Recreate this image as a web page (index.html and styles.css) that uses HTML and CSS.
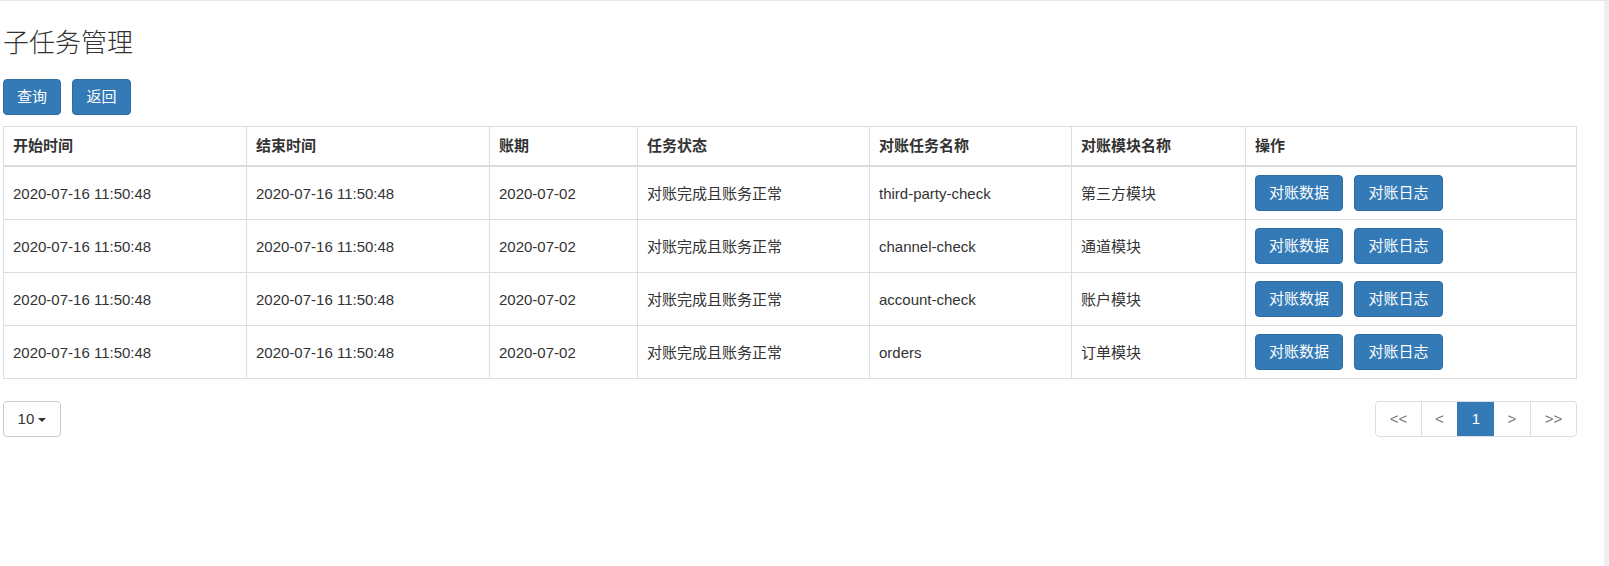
FILE: index.html
```html
<!DOCTYPE html>
<html lang="zh-CN">
<head>
<meta charset="utf-8">
<title>子任务管理</title>
<link rel="stylesheet" href="styles.css">
</head>
<body>
<div class="frame">
  <main class="page">
    <h1 class="title">子任务管理</h1>
    <div class="toolbar">
      <button class="btn btn-primary">查询</button>
      <button class="btn btn-primary">返回</button>
    </div>
    <table class="grid">
      <colgroup>
        <col style="width:243px">
        <col style="width:243px">
        <col style="width:148px">
        <col style="width:232px">
        <col style="width:202px">
        <col style="width:174px">
        <col style="width:331px">
      </colgroup>
      <thead>
        <tr><th>开始时间</th><th>结束时间</th><th>账期</th><th>任务状态</th><th>对账任务名称</th><th>对账模块名称</th><th>操作</th></tr>
      </thead>
      <tbody>
        <tr><td>2020-07-16 11:50:48</td><td>2020-07-16 11:50:48</td><td>2020-07-02</td><td>对账完成且账务正常</td><td>third-party-check</td><td>第三方模块</td><td><div class="ops"><button class="btn btn-primary btn-op">对账数据</button><button class="btn btn-primary btn-op">对账日志</button></div></td></tr>
        <tr><td>2020-07-16 11:50:48</td><td>2020-07-16 11:50:48</td><td>2020-07-02</td><td>对账完成且账务正常</td><td>channel-check</td><td>通道模块</td><td><div class="ops"><button class="btn btn-primary btn-op">对账数据</button><button class="btn btn-primary btn-op">对账日志</button></div></td></tr>
        <tr><td>2020-07-16 11:50:48</td><td>2020-07-16 11:50:48</td><td>2020-07-02</td><td>对账完成且账务正常</td><td>account-check</td><td>账户模块</td><td><div class="ops"><button class="btn btn-primary btn-op">对账数据</button><button class="btn btn-primary btn-op">对账日志</button></div></td></tr>
        <tr><td>2020-07-16 11:50:48</td><td>2020-07-16 11:50:48</td><td>2020-07-02</td><td>对账完成且账务正常</td><td>orders</td><td>订单模块</td><td><div class="ops"><button class="btn btn-primary btn-op">对账数据</button><button class="btn btn-primary btn-op">对账日志</button></div></td></tr>
      </tbody>
    </table>
    <div class="footer">
      <button class="btn btn-default page-size">10 <span class="caret"></span></button>
      <ul class="pager">
        <li class="pg">&lt;&lt;</li>
        <li class="pg">&lt;</li>
        <li class="pg active">1</li>
        <li class="pg">&gt;</li>
        <li class="pg">&gt;&gt;</li>
      </ul>
    </div>
  </main>
  <div class="strip"></div>
</div>
</body>
</html>
```

FILE: styles.css
```css
html, body {
  margin: 0;
  padding: 0;
  background: #fff;
}
body {
  font-family: "Liberation Sans", Arial, "Noto Sans CJK SC", sans-serif;
  font-size: 15px;
  color: #333;
}
.frame {
  display: flex;
  height: 566px;
  border-top: 1px solid #e8e8e8;
  box-sizing: border-box;
}
.page {
  flex: 1;
  padding: 0 27px 0 3px;
}
.strip {
  width: 6px;
  background: #efefef;
}
.title {
  margin: 25px 0 0 0;
  font-family: "Noto Sans CJK SC", sans-serif;
  font-weight: 300;
  font-size: 26px;
  line-height: 30px;
  color: #333;
}
.toolbar {
  display: flex;
  gap: 11px;
  margin-top: 23px;
  height: 36px;
}
.btn {
  font-family: "Liberation Sans", Arial, "Noto Sans CJK SC", sans-serif;
  font-size: 15px;
  height: 36px;
  border-radius: 4px;
  border: 1px solid transparent;
  padding: 0 13px;
  line-height: 34px;
  box-sizing: border-box;
  cursor: pointer;
}
.btn-primary {
  background: #337ab7;
  border-color: #2e6da4;
  color: #fff;
}
.btn-default {
  background: #fff;
  border-color: #ccc;
  color: #333;
}
.toolbar .btn { width: 58px; padding: 0; }
.toolbar .btn + .btn { width: 59px; }
.grid {
  margin-top: 11px;
  width: 1573px;
  table-layout: fixed;
  border-collapse: collapse;
  border: 1px solid #ddd;
}
.grid th, .grid td {
  border: 1px solid #ddd;
  text-align: left;
  vertical-align: middle;
  padding: 8px 9px;
  white-space: nowrap;
}
.grid th {
  font-weight: bold;
  height: 22px;
  line-height: 22px;
  border-bottom: 2px solid #ddd;
}
.grid td {
  height: 36px;
  line-height: 21px;
}
.ops {
  display: flex;
  gap: 11px;
}
.btn-op { width: 88px; padding: 0; }
.btn-op + .btn-op { width: 89px; }
.footer {
  display: flex;
  justify-content: space-between;
  align-items: center;
  margin-top: 22px;
}
.page-size {
  width: 58px;
  padding: 0;
  text-align: center;
}
.caret {
  display: inline-block;
  width: 0;
  height: 0;
  vertical-align: middle;
  border-top: 4px solid #333;
  border-left: 4px solid transparent;
  border-right: 4px solid transparent;
}
.pager {
  display: flex;
  list-style: none;
  margin: 0;
  padding: 0;
  border: 1px solid #ddd;
  border-radius: 4px;
  overflow: hidden;
  height: 36px;
  box-sizing: border-box;
}
.pg {
  line-height: 34px;
  text-align: center;
  color: #777;
  border-left: 1px solid #ddd;
  width: 35px;
}
.pg:first-child { border-left: none; width: 45px; }
.pg:last-child { width: 45px; }
.pg.active {
  background: #337ab7;
  color: #fff;
  border-left-color: #337ab7;
  width: 36px;
}
.pg.active + .pg { border-left: none; width: 36px; }
```
